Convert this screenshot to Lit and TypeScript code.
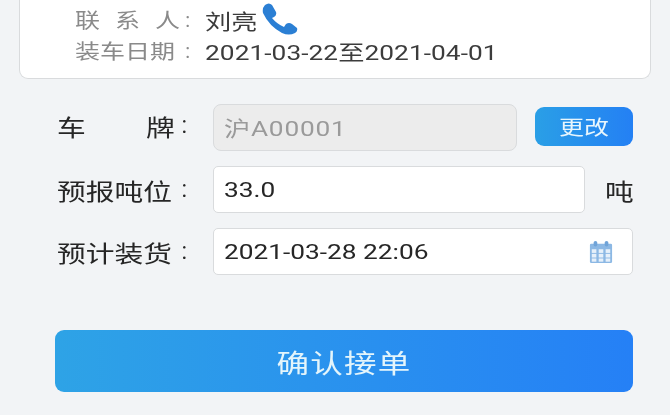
import { LitElement, html, css } from "lit";
import { customElement } from "lit/decorators.js";

@customElement("app-root")
export class AppRoot extends LitElement {
  static styles = css`
    :host {
      display: block;
      width: 670px;
      height: 415px;
      overflow: hidden;
      background: #f2f4f6;
      font-family: Roboto, "Noto Sans CJK SC", sans-serif;
      color: #333;
      filter: blur(0.4px);
    }
    .w {
      display: inline-block;
      transform: scaleX(1.25);
      transform-origin: left center;
      white-space: nowrap;
    }
    .card {
      box-sizing: border-box;
      height: 79px;
      margin: 0 19px;
      padding: 4px 0 0 55px;
      background: #fff;
      border: 1px solid #d9dbdd;
      border-top: none;
      border-radius: 0 0 9px 9px;
      font-size: 20px;
    }
    .info {
      display: flex;
      align-items: center;
      height: 31px;
    }
    .info-label {
      width: 130px;
      color: #8a8a8a;
      display: flex;
      padding-right: 15px;
      box-sizing: border-box;
      flex: none;
    }
    .sp { margin-left: 20px; }
    .colon { margin-left: auto; padding-top: 3px; }
    .info-value {
      color: #3c3c3c;
      font-size: 21px;
      letter-spacing: 0.05px;
      white-space: nowrap;
      display: flex;
      align-items: center;
    }
    .phone { width: 38px; height: 33px; margin: -3px 0 0 14px; flex: none; }
    form {
      display: flex;
      flex-direction: column;
      gap: 15px;
      margin: 25px 37px 0 57px;
    }
    .row {
      display: flex;
      align-items: center;
      height: 47px;
      font-size: 23px;
      color: #262626;
    }
    .label {
      width: 156px;
      flex: none;
      display: flex;
      padding-right: 26px;
      box-sizing: border-box;
    }
    .label.plate-label { padding-bottom: 3px; }
    .sp-wide { margin-left: 66px; }
    .field {
      box-sizing: border-box;
      height: 47px;
      display: flex;
      align-items: center;
      justify-content: space-between;
      padding: 0 10px;
      background: #fff;
      border: 1px solid #d9dbdd;
      border-radius: 5px;
      font-size: 21px;
    }
    .plate {
      width: 305px;
      padding-bottom: 2px;
      background: #ececec;
      border-radius: 8px;
      color: #9a9a9a;
      letter-spacing: 0.6px;
    }
    .tons { width: 372px; }
    .date { width: 420px; }
    .unit { margin-left: 20px; }
    .change {
      width: 98px;
      height: 39px;
      margin: 0 0 2px 18px;
      border-radius: 9px;
      background: linear-gradient(90deg, #2a9fe6, #2480f4);
      color: #e8f6fd;
      display: flex;
      align-items: center;
      justify-content: center;
      font-size: 20px;
    }
    .center { transform-origin: center; }
    .calendar { width: 24px; height: 24px; flex: none; margin-right: 9px; }
    .confirm {
      height: 62px;
      margin: 55px 37px 0 55px;
      border-radius: 9px;
      background: linear-gradient(90deg, #2ea3e6, #2580f6);
      color: #e4f5fb;
      display: flex;
      align-items: center;
      justify-content: center;
      font-size: 26px;
      letter-spacing: 1px;
    }
  `;

  render() {
    return html`
      <div class="card">
        <div class="info">
          <span class="info-label"><span class="w">联</span><span class="w sp">系</span><span class="w sp">人</span><span class="colon">:</span></span>
          <span class="info-value"><span class="w">刘亮</span>
            <svg class="phone" viewBox="0 0 38 33">
              <path d="M4 3 Q8 0 11 3 L15 10 Q16 13 13 15 L11 16 Q16 22 23 25 L25 22 Q28 20 31 22 L36 26 Q37 29 34 31 Q28 34 21 31 Q8 24 2 11 Q1 6 4 3Z" fill="#2b7fd4"/>
            </svg>
          </span>
        </div>
        <div class="info">
          <span class="info-label"><span class="w">装车日期</span><span class="colon">:</span></span>
          <span class="info-value"><span class="w">2021-03-22至2021-04-01</span></span>
        </div>
      </div>
      <form>
        <div class="row">
          <span class="label plate-label"><span class="w">车</span><span class="w sp-wide">牌</span><span class="colon">:</span></span>
          <span class="field plate"><span class="w">沪A00001</span></span>
          <span class="change"><span class="w center">更改</span></span>
        </div>
        <div class="row">
          <span class="label"><span class="w">预报吨位</span><span class="colon">:</span></span>
          <span class="field tons"><span class="w">33.0</span></span>
          <span class="unit"><span class="w">吨</span></span>
        </div>
        <div class="row">
          <span class="label"><span class="w">预计装货</span><span class="colon">:</span></span>
          <span class="field date"><span class="w">2021-03-28 22:06</span>
            <svg class="calendar" viewBox="0 0 26 26">
              <rect x="1" y="4" width="24" height="21" rx="1.5" fill="#8cb8e4"/>
              <rect x="5" y="1" width="4" height="6" rx="2" fill="#6fa3d8"/>
              <rect x="17" y="1" width="4" height="6" rx="2" fill="#6fa3d8"/>
              <g fill="#e6f0fa">
                <rect x="3" y="10" width="5" height="4"/><rect x="10.5" y="10" width="5" height="4"/><rect x="18" y="10" width="5" height="4"/>
                <rect x="3" y="15" width="5" height="4"/><rect x="10.5" y="15" width="5" height="4"/><rect x="18" y="15" width="5" height="4"/>
                <rect x="3" y="20" width="5" height="3.5"/><rect x="10.5" y="20" width="5" height="3.5"/><rect x="18" y="20" width="5" height="3.5"/>
              </g>
            </svg>
          </span>
        </div>
      </form>
      <div class="confirm"><span class="w center">确认接单</span></div>
    `;
  }
}
